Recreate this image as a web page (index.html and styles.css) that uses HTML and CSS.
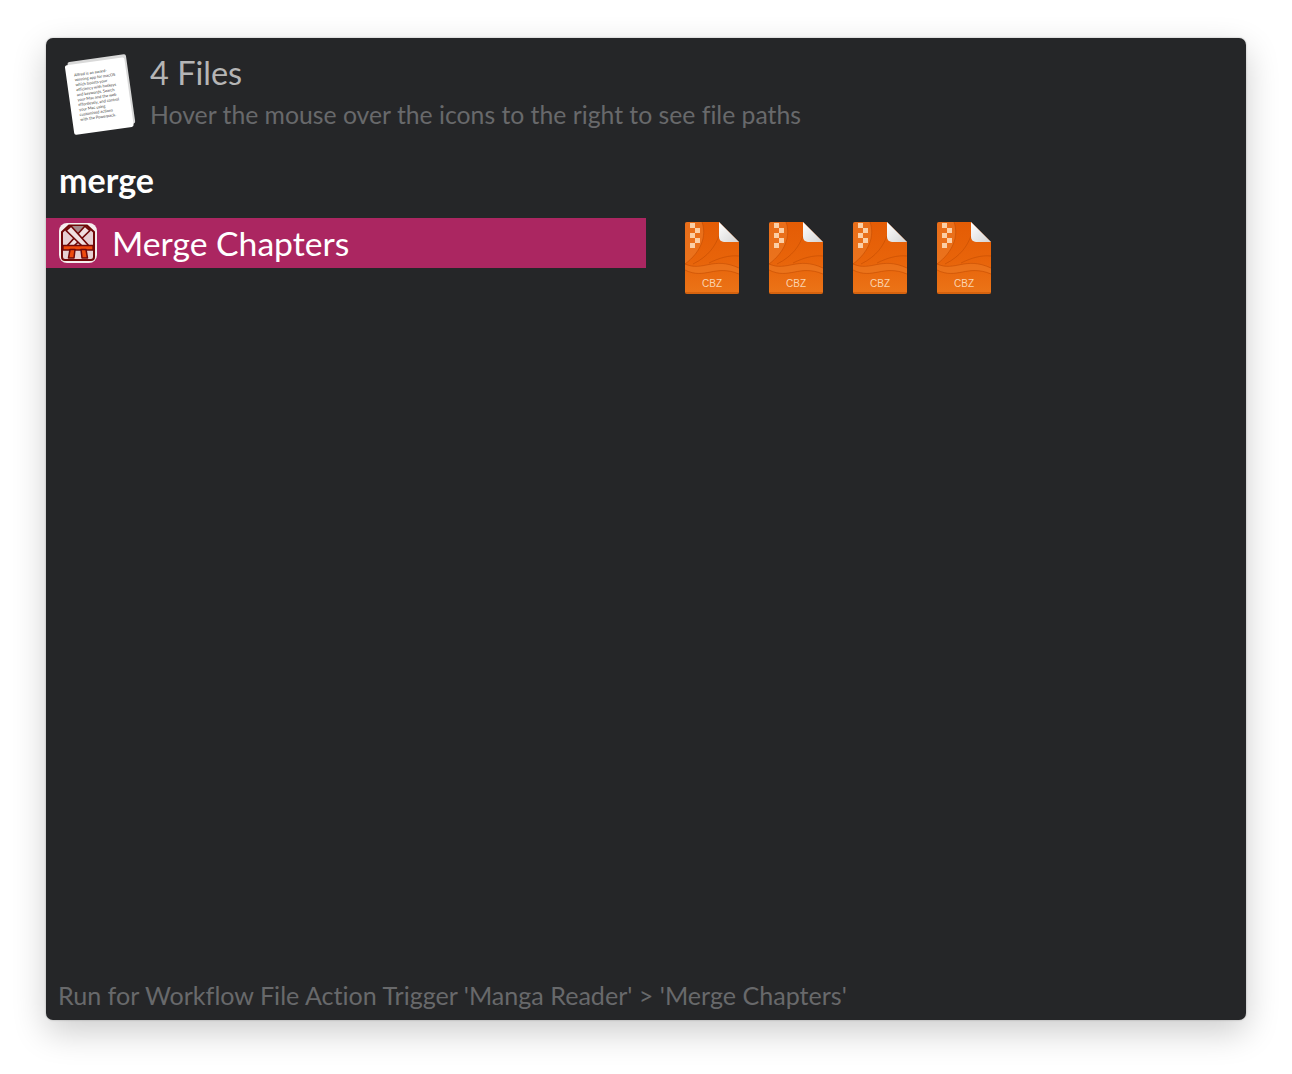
FILE: index.html
```html
<!DOCTYPE html>
<html lang="en">
<head>
    <meta charset="UTF-8">
    <title>Alfred File Action</title>
    <link rel="stylesheet" href="styles.css">
</head>
<body>

    <svg class="defs" width="0" height="0">
        <defs>
            <linearGradient id="cbz-bg" x1="0" y1="0" x2="0" y2="1">
                <stop offset="0" stop-color="#e45c05"/>
                <stop offset=".55" stop-color="#e8640a"/>
                <stop offset="1" stop-color="#eb7418"/>
            </linearGradient>
            <linearGradient id="cbz-fold" x1="0" y1="0" x2="1" y2="1">
                <stop offset="0" stop-color="#ffffff"/>
                <stop offset="1" stop-color="#d4d4d4"/>
            </linearGradient>
            <symbol id="cbz" viewBox="0 0 54 72">
                <path d="M2 0H34L54 20V70a2 2 0 0 1-2 2H2a2 2 0 0 1-2-2V2a2 2 0 0 1 2-2z" fill="url(#cbz-bg)"/>
                <path d="M17 0C22 14 16 30 0 42V2a2 2 0 0 1 2-2z" fill="#ef8a3a" opacity=".4"/>
                <path d="M0 42C18 50 28 34 54 46V52C30 42 20 58 0 48z" fill="#f28a38" opacity=".3"/>
                <path d="M0 42C18 50 28 34 54 46M17 0C22 14 16 30 0 42M8 42C24 34 30 24 34 14M24 41C34 36 44 33 54 34M0 48C20 58 30 42 54 52" fill="none" stroke="#c24c02" stroke-width=".8" opacity=".75"/>
                <path d="M5 1h5v5H5zM10 6h5v5h-5zM5 11h5v5H5zM10 16h5v5h-5zM5 21h5v5H5z" fill="#fbcfa6"/>
                <path d="M34 1L53 20L38 19a4 4 0 0 1-4-4z" fill="#a84a08" opacity=".5"/>
                <path d="M34 0L54 20H39a5 5 0 0 1-5-5z" fill="url(#cbz-fold)"/>
                <path d="M0.500 71H53.500" stroke="#b84a04" stroke-width="1" opacity=".8"/>
                <text class="cbz-label" x="27" y="65" text-anchor="middle">CBZ</text>
            </symbol>
        </defs>
    </svg>

    <div class="window">
        <div class="header">
            <svg class="docs-icon" width="72" height="84" viewBox="0 0 72 84">
                <g transform="rotate(-8 36 42)">
                    <rect x="8" y="6" width="59" height="70" rx="2" fill="#d9d9d9"/>
                    <rect x="5" y="9" width="60" height="70" rx="2" fill="#ffffff"/>
                    <g class="docs-text">
                        <text x="13" y="21">Alfred is an award-</text>
                        <text x="13" y="26">winning app for macOS</text>
                        <text x="13" y="31">which boosts your</text>
                        <text x="13" y="36">efficiency with hotkeys</text>
                        <text x="13" y="41">and keywords. Search</text>
                        <text x="13" y="46">your Mac and the web</text>
                        <text x="13" y="51">effortlessly, and control</text>
                        <text x="13" y="56">your Mac using</text>
                        <text x="13" y="61">customised actions</text>
                        <text x="13" y="66">with the Powerpack.</text>
                    </g>
                </g>
            </svg>
            <div class="header-text">
                <div class="title">4 Files</div>
                <div class="subtitle">Hover the mouse over the icons to the right to see file paths</div>
            </div>
        </div>

        <div class="query">merge</div>

        <div class="results">
            <div class="result-list">
                <div class="result-row">
                    <svg class="gi-icon" width="40" height="42" viewBox="0 0 40 42">
                        <rect x="1" y="1" width="38" height="40" rx="8" fill="#f6eeee"/>
                        <path d="M11 3.500H29L36 10V35a3 3 0 0 1-3 3H7a3 3 0 0 1-3-3V10z" fill="#e6cfd2" stroke="#6f0808" stroke-width="2" stroke-linejoin="round"/>
                        <path d="M13 4H27L20 11z" fill="#a58a8c"/>
                        <path d="M27 4L32 8.500L16 24H9z" fill="#f0e0e1" stroke="#6f0808" stroke-width="1.700" stroke-linejoin="round"/>
                        <path d="M13 4L8 8.500L24 24H31z" fill="#f0e0e1" stroke="#6f0808" stroke-width="1.700" stroke-linejoin="round"/>
                        <path d="M5 23.500H35V28H5z" fill="#ee4a0e" stroke="#6f0808" stroke-width="1.300"/>
                        <path d="M12 27.500H17L16 36H10.500zM23 27.500H28L29.500 36H24z" fill="#ee4a0e" stroke="#6f0808" stroke-width="1.500" stroke-linejoin="round"/>
                    </svg>
                    <span class="result-name">Merge Chapters</span>
                </div>
            </div>
            <div class="file-icons">
                <svg class="file-icon" width="54" height="72"><use href="#cbz"/></svg>
                <svg class="file-icon" width="54" height="72"><use href="#cbz"/></svg>
                <svg class="file-icon" width="54" height="72"><use href="#cbz"/></svg>
                <svg class="file-icon" width="54" height="72"><use href="#cbz"/></svg>
            </div>
        </div>

        <div class="footer">Run for Workflow File Action Trigger 'Manga Reader' &gt; 'Merge Chapters'</div>
    </div>

</body>
</html>
```

FILE: styles.css
```css
html, body { margin: 0; height: 100%; }
body { background: #fff; font-family: Lato, "Open Sans", sans-serif; font-variant-ligatures: none; padding: 38px 46px 0; box-sizing: border-box; overflow: hidden; }

.defs { position: absolute; }

.window { width: 1200px; height: 982px; background: #252628; border-radius: 7px; display: flex; flex-direction: column; box-shadow: 0 12px 34px rgba(0, 0, 0, 0.2), 0 0 2px rgba(0, 0, 0, 0.3); }

.header { display: flex; gap: 14px; padding: 14px 0 0 18px; height: 101px; box-sizing: border-box; }
.docs-icon { display: block; flex: none; }
.docs-text text { font-family: Lato, sans-serif; font-size: 4px; fill: #444; }
.title { font-size: 32.5px; line-height: 42px; color: #b5b5b5; }
.subtitle { font-size: 24.75px; line-height: 32px; margin-top: 5px; color: #68696b; white-space: nowrap; }

.query { font-size: 34px; font-weight: 700; line-height: 40px; color: #fff; padding: 21px 0 0 13px; height: 58px; }

.results { display: flex; }
.result-list { width: 600px; flex: none; }
.result-row { height: 50px; background: #ab2661; display: flex; align-items: center; gap: 14px; padding-left: 12px; }
.gi-icon { display: block; flex: none; }
.result-name { font-size: 33.7px; line-height: 52px; color: #fff; white-space: nowrap; }

.file-icons { display: flex; gap: 30px; padding: 4px 0 0 39px; }
.file-icon { display: block; }
.cbz-label { font-family: "Liberation Sans", sans-serif; font-size: 10px; fill: #fbd3ae; }

.footer { margin-top: auto; padding: 0 0 9px 12px; font-size: 25.1px; line-height: 32px; color: #68696b; white-space: nowrap; }
```
